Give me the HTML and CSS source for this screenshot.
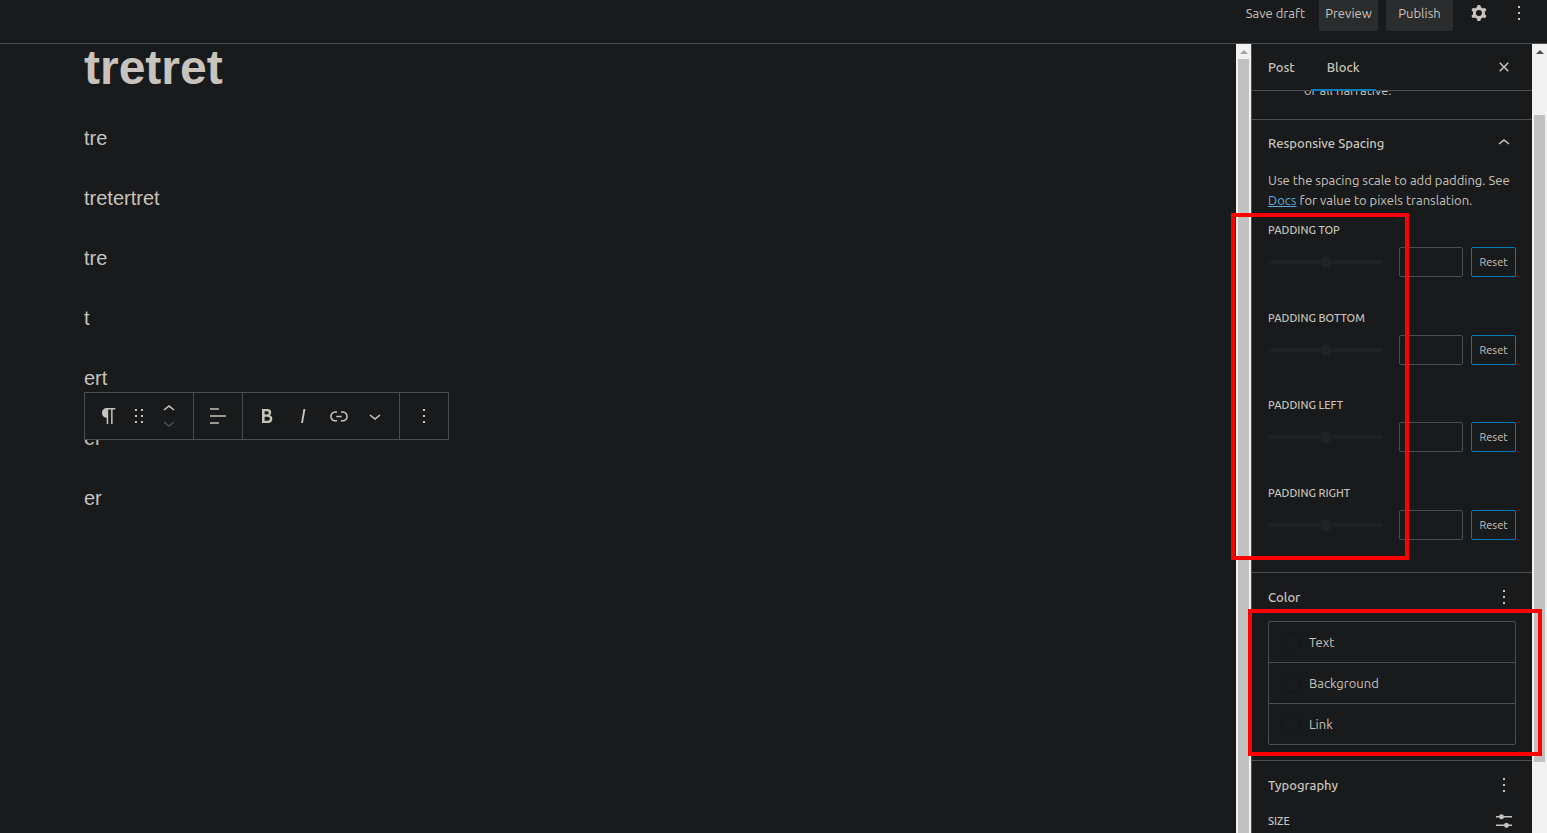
FILE: index.html
```html
<!DOCTYPE html>
<html lang="en">
<head>
  <meta charset="UTF-8">
  <meta name="viewport" content="width=device-width, initial-scale=1.0">
  <title>Edit Post</title>
  <link rel="stylesheet" href="styles.css">
</head>
<body>
  <header class="topbar">
    <button class="btn btn-link">Save draft</button>
    <button class="btn btn-preview">Preview</button>
    <button class="btn btn-publish">Publish</button>
    <div class="topbar-icons">
      <button class="icon-btn" aria-label="Settings">
        <svg viewBox="0 0 24 24"><path fill-rule="evenodd" d="M10.289 4.836A1 1 0 0111.275 4h1.306a1 1 0 01.987.836l.244 1.466c.787.26 1.503.679 2.108 1.218l1.393-.522a1 1 0 011.216.437l.653 1.13a1 1 0 01-.23 1.273l-1.148.944a6.025 6.025 0 010 2.435l1.149.946a1 1 0 01.23 1.272l-.653 1.13a1 1 0 01-1.216.437l-1.394-.522c-.605.54-1.32.958-2.108 1.218l-.244 1.466a1 1 0 01-.987.836h-1.306a1 1 0 01-.986-.836l-.244-1.466a5.995 5.995 0 01-2.108-1.218l-1.394.522a1 1 0 01-1.217-.436l-.653-1.131a1 1 0 01.23-1.272l1.149-.946a6.026 6.026 0 010-2.435l-1.148-.944a1 1 0 01-.23-1.272l.653-1.131a1 1 0 011.217-.437l1.393.522a5.994 5.994 0 012.108-1.218l.244-1.466zM14.929 12a3 3 0 11-6 0 3 3 0 016 0z"/></svg>
      </button>
      <button class="icon-btn" aria-label="Options">
        <svg viewBox="0 0 24 24"><path d="M13 19h-2v-2h2v2zm0-6h-2v-2h2v2zm0-6h-2V5h2v2z"/></svg>
      </button>
    </div>
  </header>

  <div class="workspace">
    <main class="editor">
      <h1>tretret</h1>
      <p>tre</p>
      <p>tretertret</p>
      <p>tre</p>
      <p>t</p>
      <p>ert</p>
      <p class="selected">
        er
        <span class="toolbar" role="toolbar">
          <span class="toolbar-group">
            <button class="icon-btn" aria-label="Paragraph">
              <svg viewBox="0 0 24 24"><path d="M18.3 4H9.9v-.1l-.9.2c-2.3.4-4 2.4-4 4.8s1.7 4.4 4 4.8l.7.1V20h1.5V5.5h2.9V20h1.5V5.5h2.7V4z"/></svg>
            </button>
            <button class="icon-btn drag" aria-label="Drag">
              <svg viewBox="0 0 24 24"><path d="M8 7h2V5H8v2zm0 6h2v-2H8v2zm0 6h2v-2H8v2zm6-14v2h2V5h-2zm0 8h2v-2h-2v2zm0 6h2v-2h-2v2z"/></svg>
            </button>
            <span class="movers">
              <button class="mover" aria-label="Move up">
                <svg viewBox="0 0 24 24"><path d="M6.5 12.4L12 8l5.5 4.4-.9 1.2L12 10l-4.5 3.6-1-1.2z"/></svg>
              </button>
              <button class="mover" aria-label="Move down" disabled>
                <svg viewBox="0 0 24 24"><path d="M17.5 11.6L12 16l-5.5-4.4.9-1.2L12 14l4.5-3.6 1 1.2z"/></svg>
              </button>
            </span>
          </span>
          <span class="toolbar-group">
            <button class="icon-btn" aria-label="Align">
              <svg viewBox="0 0 24 24"><path d="M4 19.8h8.9v-1.5H4v1.5zm8.9-15.6H4v1.5h8.9V4.2zm-8.9 7v1.5h16v-1.5H4z"/></svg>
            </button>
          </span>
          <span class="toolbar-group">
            <button class="icon-btn" aria-label="Bold">
              <svg viewBox="0 0 24 24"><path d="M14.7 11.3c1-.6 1.5-1.6 1.5-3 0-2.3-1.3-3.4-4-3.4H7v14h5.8c1.4 0 2.5-.3 3.3-1 .8-.7 1.2-1.7 1.2-2.9.1-1.9-.8-3.1-2.6-3.7zm-5.1-4h2.3c.6 0 1.1.1 1.4.4.3.3.5.7.5 1.2s-.2 1-.5 1.2c-.3.3-.8.4-1.4.4H9.6V7.3zm4.6 9c-.4.3-1 .4-1.7.4H9.6v-3.9h2.9c.7 0 1.3.2 1.7.5.4.3.6.8.6 1.5s-.2 1.2-.6 1.5z"/></svg>
            </button>
            <button class="icon-btn" aria-label="Italic">
              <svg viewBox="0 0 24 24"><path d="M12.5 5L10 19h1.9l2.5-14z"/></svg>
            </button>
            <button class="icon-btn" aria-label="Link">
              <svg viewBox="0 0 24 24"><path d="M15.6 7.2H14v1.5h1.6c2 0 3.7 1.7 3.7 3.7s-1.7 3.7-3.7 3.7H14v1.5h1.6c2.8 0 5.2-2.3 5.2-5.2 0-2.9-2.3-5.2-5.2-5.2zM4.7 12.4c0-2 1.7-3.7 3.7-3.7H10V7.2H8.4c-2.9 0-5.2 2.3-5.2 5.2 0 2.9 2.3 5.2 5.2 5.2H10v-1.5H8.4c-2 0-3.7-1.7-3.7-3.7zm4.6.9h5.3v-1.5H9.3v1.5z"/></svg>
            </button>
            <button class="icon-btn" aria-label="More">
              <svg viewBox="0 0 24 24"><path d="M17.5 11.6L12 16l-5.5-4.4.9-1.2L12 14l4.5-3.6 1 1.2z"/></svg>
            </button>
          </span>
          <span class="toolbar-group">
            <button class="icon-btn" aria-label="Options">
              <svg viewBox="0 0 24 24"><path d="M13 19h-2v-2h2v2zm0-6h-2v-2h2v2zm0-6h-2V5h2v2z"/></svg>
            </button>
          </span>
        </span>
      </p>
      <p>er</p>
    </main>
    <div class="scrollbar scrollbar-editor"><span class="arrow"></span><span class="thumb"></span></div>

    <aside class="sidebar">
      <div class="tabs">
        <button class="tab">Post</button>
        <button class="tab active">Block</button>
        <button class="icon-btn close" aria-label="Close settings">
          <svg viewBox="0 0 24 24"><path d="M12 13.06l3.712 3.713 1.061-1.06L13.061 12l3.712-3.712-1.06-1.06L12 10.938 8.288 7.227l-1.061 1.06L10.939 12l-3.712 3.712 1.06 1.061L12 13.061z"/></svg>
        </button>
      </div>
      <div class="block-card">
        <span>of all narrative.</span>
      </div>

      <section class="panel panel-spacing">
        <div class="panel-header">
          <h2>Responsive Spacing</h2>
          <button class="icon-btn" aria-label="Collapse">
            <svg viewBox="0 0 24 24"><path d="M6.5 12.4L12 8l5.5 4.4-.9 1.2L12 10l-4.5 3.6-1-1.2z"/></svg>
          </button>
        </div>
        <p class="help">Use the spacing scale to add padding. See <a href="#">Docs</a> for value to pixels translation.</p>
        <div class="controls">
          <div class="control">
            <label for="padTop">Padding Top</label>
            <div class="control-row">
              <input type="range" id="padTop" min="0" max="10" value="5">
              <input type="number" aria-label="Padding Top value">
              <button class="reset">Reset</button>
            </div>
          </div>
          <div class="control">
            <label for="padBottom">Padding Bottom</label>
            <div class="control-row">
              <input type="range" id="padBottom" min="0" max="10" value="5">
              <input type="number" aria-label="Padding Bottom value">
              <button class="reset">Reset</button>
            </div>
          </div>
          <div class="control">
            <label for="padLeft">Padding Left</label>
            <div class="control-row">
              <input type="range" id="padLeft" min="0" max="10" value="5">
              <input type="number" aria-label="Padding Left value">
              <button class="reset">Reset</button>
            </div>
          </div>
          <div class="control">
            <label for="padRight">Padding Right</label>
            <div class="control-row">
              <input type="range" id="padRight" min="0" max="10" value="5">
              <input type="number" aria-label="Padding Right value">
              <button class="reset">Reset</button>
            </div>
          </div>
        </div>
      </section>

      <section class="panel panel-color">
        <div class="panel-header">
          <h2>Color</h2>
          <button class="icon-btn" aria-label="Color options">
            <svg viewBox="0 0 24 24"><path d="M13 19h-2v-2h2v2zm0-6h-2v-2h2v2zm0-6h-2V5h2v2z"/></svg>
          </button>
        </div>
        <div class="color-list">
          <button class="color-item"><span class="swatch"></span>Text</button>
          <button class="color-item"><span class="swatch"></span>Background</button>
          <button class="color-item"><span class="swatch"></span>Link</button>
        </div>
      </section>

      <section class="panel panel-typography">
        <div class="panel-header">
          <h2>Typography</h2>
          <button class="icon-btn" aria-label="Typography options">
            <svg viewBox="0 0 24 24"><path d="M13 19h-2v-2h2v2zm0-6h-2v-2h2v2zm0-6h-2V5h2v2z"/></svg>
          </button>
        </div>
        <div class="size-row">
          <span>Size</span>
          <button class="icon-btn" aria-label="Set custom size">
            <svg viewBox="0 0 24 24"><path d="M14.5 13.8c-1.1 0-2.1.7-2.4 1.8H4V17h8.1c.3 1 1.3 1.8 2.4 1.8s2.1-.7 2.4-1.8H20v-1.5h-3.1c-.3-1-1.3-1.7-2.4-1.7zM11.9 7c-.3-1-1.3-1.8-2.4-1.8S7.4 6 7.1 7H4v1.5h3.1c.3 1 1.3 1.8 2.4 1.8s2.1-.7 2.4-1.8H20V7h-8.1z"/></svg>
          </button>
        </div>
      </section>
    </aside>
    <div class="scrollbar scrollbar-sidebar"><span class="arrow"></span><span class="thumb"></span></div>
  </div>

  <div class="mark mark-spacing"></div>
  <div class="mark mark-color"></div>
</body>
</html>
```
FILE: styles.css
```css
* {
  box-sizing: border-box;
}

body {
  margin: 0;
  position: relative;
  height: 100vh;
  display: flex;
  flex-direction: column;
  overflow: hidden;
  background: #181a1b;
  color: #c8c3bc;
  font-family: Ubuntu, "Noto Sans", sans-serif;
  font-size: 13px;
}

button {
  padding: 0;
  border: none;
  background: none;
  color: inherit;
  font: inherit;
  cursor: pointer;
}

svg {
  display: block;
  width: 24px;
  height: 24px;
  fill: currentColor;
}

.icon-btn {
  display: flex;
  align-items: center;
  justify-content: center;
  width: 36px;
  height: 36px;
}

/* Top bar, scrolled slightly under the window edge */
.topbar {
  flex: none;
  display: flex;
  justify-content: flex-end;
  align-items: flex-end;
  gap: 8px;
  height: 44px;
  padding: 0 10px 12px 0;
  border-bottom: 1px solid #4b4e50;
}

.topbar-icons {
  display: flex;
  gap: 4px;
}

.btn {
  height: 36px;
  border-radius: 2px;
}

.btn-link {
  padding: 0 6px;
}

.btn-preview {
  width: 59px;
  background: #2b2c2d;
}

.btn-publish {
  width: 67px;
  background: #2b2c2d;
}

.workspace {
  flex: 1;
  min-height: 0;
  display: flex;
}

/* Editor canvas */
.editor {
  flex: 1;
  padding: 0 84px;
  font-family: "Liberation Sans", Arial, sans-serif;
}

.editor h1 {
  margin: 0 0 31px;
  font-size: 48px;
  line-height: 48px;
}

.editor p {
  margin: 0 0 30px;
  font-size: 20px;
  line-height: 30px;
}

.selected {
  position: relative;
}

.toolbar {
  position: absolute;
  left: 0;
  bottom: 13px;
  display: flex;
  height: 48px;
  border: 1px solid #4b4e50;
  background: #181a1b;
}

.toolbar-group {
  display: flex;
  align-items: center;
  padding: 0 6px;
}

.toolbar-group + .toolbar-group {
  border-left: 1px solid #4b4e50;
}

.toolbar .drag {
  width: 24px;
}

.movers {
  display: flex;
  flex-direction: column;
  width: 36px;
}

.mover {
  display: flex;
  justify-content: center;
  align-items: center;
  height: 14px;
}

.mover:disabled {
  color: #4b4e50;
}

/* Scrollbars */
.scrollbar {
  flex: none;
  display: flex;
  flex-direction: column;
  width: 15px;
  padding: 0 2px;
  background: #f1f1f1;
}

.arrow {
  align-self: center;
  margin: 6px 0 5px;
  border: 4px solid transparent;
  border-top: none;
  border-bottom-color: #505050;
}

.scrollbar-editor .arrow {
  border-bottom-color: #a3a3a3;
}

.thumb {
  background: #c1c1c1;
}

.scrollbar-editor .thumb {
  flex: 1;
}

.scrollbar-sidebar .thumb {
  height: 82%;
  margin-top: 56px;
}

/* Settings sidebar */
.sidebar {
  flex: none;
  width: 281px;
  border-left: 1px solid #4b4e50;
  overflow: hidden;
}

.tabs {
  display: flex;
  height: 47px;
  border-bottom: 1px solid #4b4e50;
}

.tab {
  height: 47px;
  padding: 0 16px 2px;
  font-weight: 500;
}

.tab.active {
  padding-bottom: 0;
  border-bottom: 2px solid #007cba;
}

.close {
  margin: 5px 10px 0 auto;
}

/* Card is scrolled, only the end of its last line shows below the tabs */
.block-card {
  display: flex;
  align-items: flex-end;
  height: 28px;
  padding: 0 0 20px 52px;
  line-height: 18px;
  overflow: hidden;
}

.panel {
  border-top: 1px solid #4b4e50;
}

.panel-spacing {
  padding: 0 16px 2px;
}

.panel-color {
  padding: 0 16px 15px;
}

.panel-typography {
  padding: 0 16px;
}

.panel-header {
  display: flex;
  align-items: center;
  justify-content: space-between;
  height: 48px;
}

.panel-spacing .panel-header {
  height: 46px;
}

.panel-header .icon-btn,
.size-row .icon-btn {
  width: 24px;
}

h2 {
  margin: 0;
  font-size: 13px;
  font-weight: 500;
}

.help {
  margin: 4px 0 10px;
  line-height: 20px;
}

.help a {
  color: #5ea9dd;
}

.controls {
  display: flex;
  flex-direction: column;
  height: 350px;
}

.control {
  flex: 1;
}

.control label {
  display: block;
  margin-bottom: 7px;
  font-size: 11px;
  font-weight: 500;
  line-height: 20px;
  text-transform: uppercase;
}

.control-row {
  display: flex;
  align-items: center;
}

input[type="range"] {
  appearance: none;
  flex: 1;
  min-width: 0;
  height: 12px;
  margin: 0 16px 0 0;
  background: transparent;
}

input[type="range"]::-webkit-slider-runnable-track {
  height: 4px;
  border-radius: 2px;
  background: #1f2223;
}

input[type="range"]::-webkit-slider-thumb {
  appearance: none;
  width: 12px;
  height: 12px;
  margin-top: -4px;
  border-radius: 50%;
  background: #1e2324;
}

input[type="number"] {
  appearance: textfield;
  width: 64px;
  height: 30px;
  border: 1px solid #4b4e50;
  border-radius: 2px;
  background: transparent;
  color: inherit;
}

.reset {
  width: 45px;
  height: 30px;
  margin-left: 8px;
  border: 1px solid #007cba;
  border-radius: 2px;
  font-size: 11px;
}

.color-list {
  border: 1px solid #4b4e50;
  border-radius: 2px;
}

.color-item {
  display: flex;
  align-items: center;
  gap: 8px;
  width: 100%;
  height: 40px;
  padding: 0 12px;
}

.color-item + .color-item {
  height: 41px;
  border-top: 1px solid #4b4e50;
}

.swatch {
  width: 20px;
  height: 20px;
  border: 1px solid #141617;
  border-radius: 50%;
}

.size-row {
  display: flex;
  align-items: center;
  justify-content: space-between;
  height: 24px;
  font-size: 11px;
  font-weight: 500;
  text-transform: uppercase;
}

/* Red highlight frames */
.mark {
  position: absolute;
  border: 4px solid #f00;
  pointer-events: none;
}

.mark-spacing {
  top: 213px;
  right: 138px;
  width: 178px;
  height: 347px;
}

.mark-color {
  top: 609px;
  right: 5px;
  width: 294px;
  height: 147px;
}
```
